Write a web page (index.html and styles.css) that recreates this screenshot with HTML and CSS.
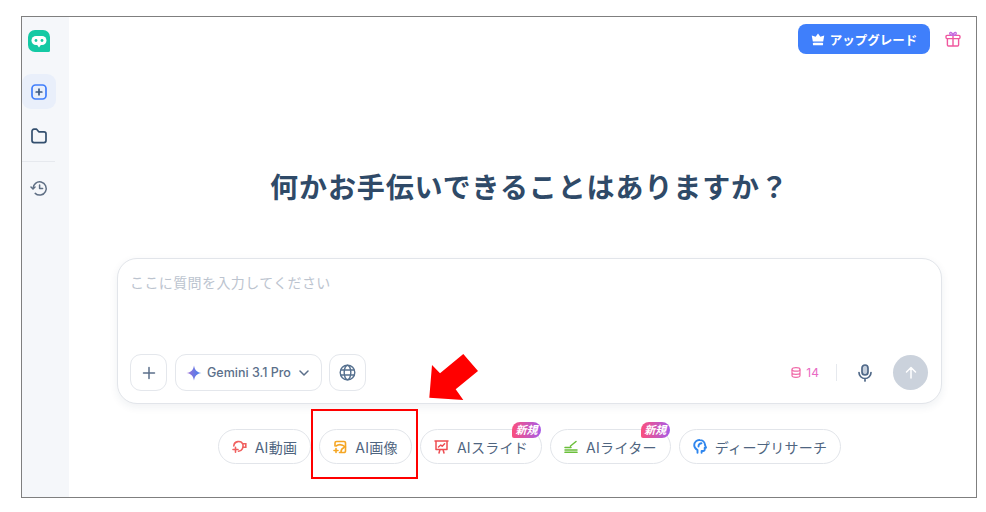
FILE: index.html
```html
<!DOCTYPE html>
<html lang="ja">
<head>
    <meta charset="UTF-8">
    <title>AI Chat</title>
    <link rel="stylesheet" href="styles.css">
</head>
<body>
    <div class="frame">
        <div class="sidebar">
            <svg class="logo" width="22" height="22" viewBox="0 0 22 22">
                <path d="M7 0h8a7 7 0 0 1 7 7v13.500a1.500 1.500 0 0 1-1.500 1.500H7a7 7 0 0 1-7-7V7a7 7 0 0 1 7-7z" fill="#14c9a4"/>
                <rect x="3.500" y="6" width="15" height="9" rx="4.500" fill="#fff"/>
                <path d="M9 14.800h4l-2 2.600z" fill="#fff"/>
                <circle cx="8" cy="10.500" r="1.400" fill="#14c9a4"/>
                <circle cx="14" cy="10.500" r="1.400" fill="#14c9a4"/>
            </svg>
            <div class="side-btn active">
                <svg width="18" height="18" viewBox="0 0 18 18" fill="none" stroke="#3f7dfb" stroke-width="1.700" stroke-linecap="round">
                    <rect x="2" y="2" width="14" height="14" rx="3.500"/>
                    <path d="M9 6.200v5.600M6.200 9h5.600" stroke="#3d5a80"/>
                </svg>
            </div>
            <div class="side-btn">
                <svg width="18" height="18" viewBox="0 0 18 18" fill="none" stroke="#34506f" stroke-width="1.700" stroke-linejoin="round">
                    <path d="M2 4.200A2 2 0 0 1 4 2.200h2.600l2.200 2.600H14a2 2 0 0 1 2 2v6.800a2 2 0 0 1-2 2H4a2 2 0 0 1-2-2z"/>
                </svg>
            </div>
            <div class="side-line"></div>
            <div class="side-btn">
                <svg width="18" height="18" viewBox="0 0 18 18" fill="none" stroke="#5f6f84" stroke-width="1.500" stroke-linecap="round" stroke-linejoin="round">
                    <path d="M3 9.500a6.600 6.600 0 1 1 2.200 4.900"/>
                    <path d="M1 8l2 2 2-2"/>
                    <path d="M9.600 6v3.600h3"/>
                </svg>
            </div>
        </div>

        <div class="main">
            <div class="topbar">
                <button class="upgrade">
                    <svg width="14" height="13" viewBox="0 0 13 12" fill="#fff">
                        <path d="M6.500 0.500l2.200 3 3.600-1.300-1 5.600H1.700l-1-5.600 3.600 1.300z"/>
                        <rect x="1.800" y="9" width="9.400" height="2.400" rx=".8"/>
                    </svg>
                    アップグレード
                </button>
                <svg width="16" height="16" viewBox="0 0 16 16" fill="none" stroke="#f0589f" stroke-width="1.400" stroke-linejoin="round">
                    <rect x="1" y="4.400" width="14" height="3.200" rx="1"/>
                    <path d="M2.400 7.600V14a1 1 0 0 0 1 1h9.200a1 1 0 0 0 1-1V7.600M8 4.400V15"/>
                    <path d="M8 4.400C6 4.400 4.400 3.600 4.800 2 5.300.6 7.400 1.400 8 4.400zM8 4.400c2 0 3.600-.8 3.200-2.400C10.700.6 8.600 1.400 8 4.400z" stroke="#c46ae0"/>
                </svg>
            </div>

            <h1 class="title">何かお手伝いできることはありますか？</h1>

            <div class="composer">
                <div class="placeholder">ここに質問を入力してください</div>
                <div class="tools">
                    <div class="tool square">
                        <svg width="14" height="14" viewBox="0 0 14 14" stroke="#5b6f8a" stroke-width="1.500" stroke-linecap="round"><path d="M7 1.500v11M1.500 7h11"/></svg>
                    </div>
                    <div class="tool model">
                        <svg width="16" height="16" viewBox="0 0 16 16">
                            <defs>
                                <linearGradient id="star" x1="0" y1="0" x2="1" y2="0">
                                    <stop offset="0" stop-color="#a06fd6"/>
                                    <stop offset="1" stop-color="#3f82f0"/>
                                </linearGradient>
                            </defs>
                            <path d="M8 .5C8.700 5 11 7.300 15.500 8 11 8.700 8.700 11 8 15.500 7.300 11 5 8.700.5 8 5 7.300 7.300 5 8 .5z" fill="url(#star)"/>
                        </svg>
                        <span>Gemini 3.1 Pro</span>
                        <svg width="10" height="6" viewBox="0 0 10 6" fill="none" stroke="#5b6f8a" stroke-width="1.500" stroke-linecap="round" stroke-linejoin="round"><path d="M1 1l4 4 4-4"/></svg>
                    </div>
                    <div class="tool square">
                        <svg width="17" height="17" viewBox="0 0 17 17" fill="none" stroke="#55708f" stroke-width="1.400">
                            <circle cx="8.500" cy="8.500" r="7.300"/>
                            <ellipse cx="8.500" cy="8.500" rx="3.300" ry="7.300"/>
                            <path d="M1.600 6h13.800M1.600 11h13.800"/>
                        </svg>
                    </div>
                    <div class="credits">
                        <svg width="10" height="11" viewBox="0 0 10 11" fill="none" stroke="#f06aa8" stroke-width="1.200">
                            <ellipse cx="5" cy="2.400" rx="4" ry="1.800"/>
                            <path d="M1 2.400v6.200c0 1 1.800 1.800 4 1.800s4-.8 4-1.800V2.400M1 5.500c0 1 1.800 1.800 4 1.800s4-.8 4-1.800"/>
                        </svg>
                        <span>14</span>
                    </div>
                    <div class="tool-line"></div>
                    <svg class="mic" width="14" height="18" viewBox="0 0 14 18" fill="none" stroke="#4f6888" stroke-width="1.700" stroke-linecap="round">
                        <rect x="4" y="1" width="6" height="10" rx="3" fill="#c5cfdc"/>
                        <path d="M1 8.500a6 6 0 0 0 12 0M7 14.500V17"/>
                    </svg>
                    <div class="send">
                        <svg width="12" height="13" viewBox="0 0 12 13" fill="none" stroke="#fff" stroke-width="1.500" stroke-linecap="round" stroke-linejoin="round"><path d="M6 12V1.500M1.500 6L6 1.500 10.500 6"/></svg>
                    </div>
                </div>
            </div>

            <div class="chips">
                <div class="chip">
                    <svg width="15" height="14" viewBox="0 0 15 14" fill="none" stroke="#f0605f" stroke-width="1.600" stroke-linecap="round">
                        <path d="M1.800 6A4.800 4.800 0 0 1 11 4.500c.5 2.800-.8 6.500-4.500 6.800"/>
                        <path d="M11 3.800h2.800v3.400h-2.900"/>
                        <path d="M1 9.500h5M3.500 7.200v5"/>
                    </svg>
                    AI動画
                </div>
                <div class="chip">
                    <svg width="14" height="14" viewBox="0 0 14 14" fill="none" stroke="#f5a623" stroke-width="1.600" stroke-linecap="round" stroke-linejoin="round">
                        <path d="M2 6V3a1.500 1.500 0 0 1 1.500-1.500H11A1.500 1.500 0 0 1 12.500 3v8a1.500 1.500 0 0 1-1.500 1.500H6.500"/>
                        <path d="M3 6c3-2.200 6.500-1.500 9.500 1M8 12c0-2 .8-3.500 3-4.500"/>
                        <path d="M1 10.500h4M3 8.500v4"/>
                    </svg>
                    AI画像
                </div>
                <div class="chip">
                    <svg width="15" height="14" viewBox="0 0 15 14" fill="none" stroke="#ee4d52" stroke-width="1.500" stroke-linecap="round" stroke-linejoin="round">
                        <path d="M1 1h13M2 1v8.500h11V1M6 9.500L5 13M9 9.500l1 3.500"/>
                        <path d="M4.500 7L6.800 5l1.400 1.200L10.600 3.800"/>
                    </svg>
                    AIスライド
                    <span class="badge">新規</span>
                </div>
                <div class="chip">
                    <svg width="14" height="13" viewBox="0 0 14 13" fill="none" stroke="#6bbf3a" stroke-width="1.500" stroke-linecap="round">
                        <path d="M1 7.500h6M1 10h12M1 12.300h12M6.500 6l5.500-4.500"/>
                    </svg>
                    AIライター
                    <span class="badge">新規</span>
                </div>
                <div class="chip">
                    <svg width="14" height="15" viewBox="0 0 14 15" fill="none" stroke="#2f86ee" stroke-width="1.900" stroke-linecap="round" stroke-linejoin="round">
                        <path d="M4.500 13.800V11C2.500 9.800 1.200 8.200 1.200 6.200A5.200 5.200 0 0 1 6.800 1a5.200 5.200 0 0 1 5.200 5l1 2.700h-1.300v1.800a1.500 1.500 0 0 1-1.500 1.500H8.600v1.800"/>
                        <path d="M8.500 4.300A3 3 0 0 0 5.500 7.500"/>
                    </svg>
                    ディープリサーチ
                </div>
            </div>
        </div>
    </div>

    <!-- annotation on top of the screenshot -->
    <div class="mark-box"></div>
    <svg class="mark-arrow" width="50" height="48" viewBox="0 0 50 48">
        <path d="M.3 44.700L3 12l8 8.300L34.300 1 49 18 26.700 36.300 34.300 47z" fill="#ff0000"/>
    </svg>
</body>
</html>
```

FILE: styles.css
```css
* {
    box-sizing: border-box;
}
body {
    margin: 0;
    padding: 16px 9px 14px 21px;
    height: 512px;
    background: white;
    font-family: 'Inter', 'Noto Sans CJK JP', sans-serif;
    overflow: hidden;
}
.frame {
    display: flex;
    height: 482px;
    border: 1px solid #7f7f7f;
    background: white;
}
.sidebar {
    width: 47px;
    background: #f5f7fa;
    display: flex;
    flex-direction: column;
    align-items: flex-start;
    padding-top: 13px;
}
.logo {
    margin: 0 0 22px 6px;
}
.side-btn {
    width: 34px;
    height: 35px;
    border-radius: 9px;
    display: flex;
    align-items: center;
    justify-content: center;
    margin-bottom: 9px;
}
.side-btn.active {
    background: #e9effa;
}
.side-line {
    width: 33px;
    height: 1px;
    background: #e6e9ee;
    margin: -1px 0 8px;
}
.main {
    flex: 1;
    padding: 7px 34px 0 48px;
    display: flex;
    flex-direction: column;
}
.topbar {
    display: flex;
    justify-content: flex-end;
    align-items: center;
    gap: 15px;
    margin-right: -19px;
}
.upgrade {
    width: 132px;
    height: 30px;
    border: none;
    border-radius: 8px;
    background: #3f7ffb;
    color: white;
    font-family: inherit;
    font-size: 12.5px;
    font-weight: 700;
    display: flex;
    align-items: center;
    justify-content: center;
    gap: 5px;
}
.title {
    margin: 114px 0 0;
    text-align: center;
    color: #2f4a68;
    font-size: 28px;
    line-height: 40px;
    font-weight: 700;
    letter-spacing: 0.9px;
    white-space: nowrap;
}
.composer {
    margin-top: 50px;
    height: 146px;
    border: 1px solid #e2e5ea;
    border-radius: 20px;
    box-shadow: 0 3px 8px rgba(30, 50, 80, 0.07);
    padding: 14px 13px 12px 12px;
    display: flex;
    flex-direction: column;
    justify-content: space-between;
    background: white;
}
.placeholder {
    color: #bcc4cf;
    font-size: 14px;
    letter-spacing: 0.4px;
    line-height: 20px;
}
.tools {
    display: flex;
    align-items: center;
    gap: 7px;
}
.tool {
    height: 37px;
    border: 1px solid #e4e7ec;
    border-radius: 11px;
    display: flex;
    align-items: center;
    justify-content: center;
}
.square {
    width: 37px;
}
.model {
    width: 147px;
    margin-left: 1px;
    padding-left: 10px;
    justify-content: flex-start;
    gap: 5px;
    font-size: 12.5px;
    font-weight: 500;
    color: #5b6f8a;
}
.model span {
    margin-right: 3px;
}
.credits {
    margin-left: auto;
    display: flex;
    align-items: center;
    gap: 5px;
    font-size: 12px;
    color: #e96ac4;
}
.tool-line {
    width: 1px;
    height: 17px;
    background: #e6e9ee;
    margin: 0 14px 0 10px;
}
.mic {
    margin-right: 14px;
}
.send {
    width: 35px;
    height: 35px;
    border-radius: 50%;
    background: #cbd2dc;
    display: flex;
    align-items: center;
    justify-content: center;
}
.chips {
    margin-top: 25px;
    display: flex;
    justify-content: center;
    gap: 8px;
}
.chip {
    position: relative;
    height: 35px;
    padding: 0 13px;
    border: 1px solid #e2e5ea;
    border-radius: 18px;
    display: flex;
    align-items: center;
    gap: 8px;
    font-size: 14px;
    letter-spacing: 0.3px;
    color: #4f6580;
    background: white;
}
.badge {
    position: absolute;
    top: -8px;
    right: 0;
    width: 29px;
    height: 16px;
    border-radius: 8px 8px 8px 2px;
    background: linear-gradient(to right, #fb4f7d, #a65be8);
    color: white;
    font-size: 11px;
    font-weight: 700;
    font-style: italic;
    letter-spacing: 0;
    line-height: 16px;
    text-align: center;
}
.mark-box {
    position: absolute;
    left: 311px;
    top: 409px;
    width: 107px;
    height: 70px;
    border: 2px solid #ff0000;
}
.mark-arrow {
    position: absolute;
    left: 429px;
    top: 353px;
}
```
